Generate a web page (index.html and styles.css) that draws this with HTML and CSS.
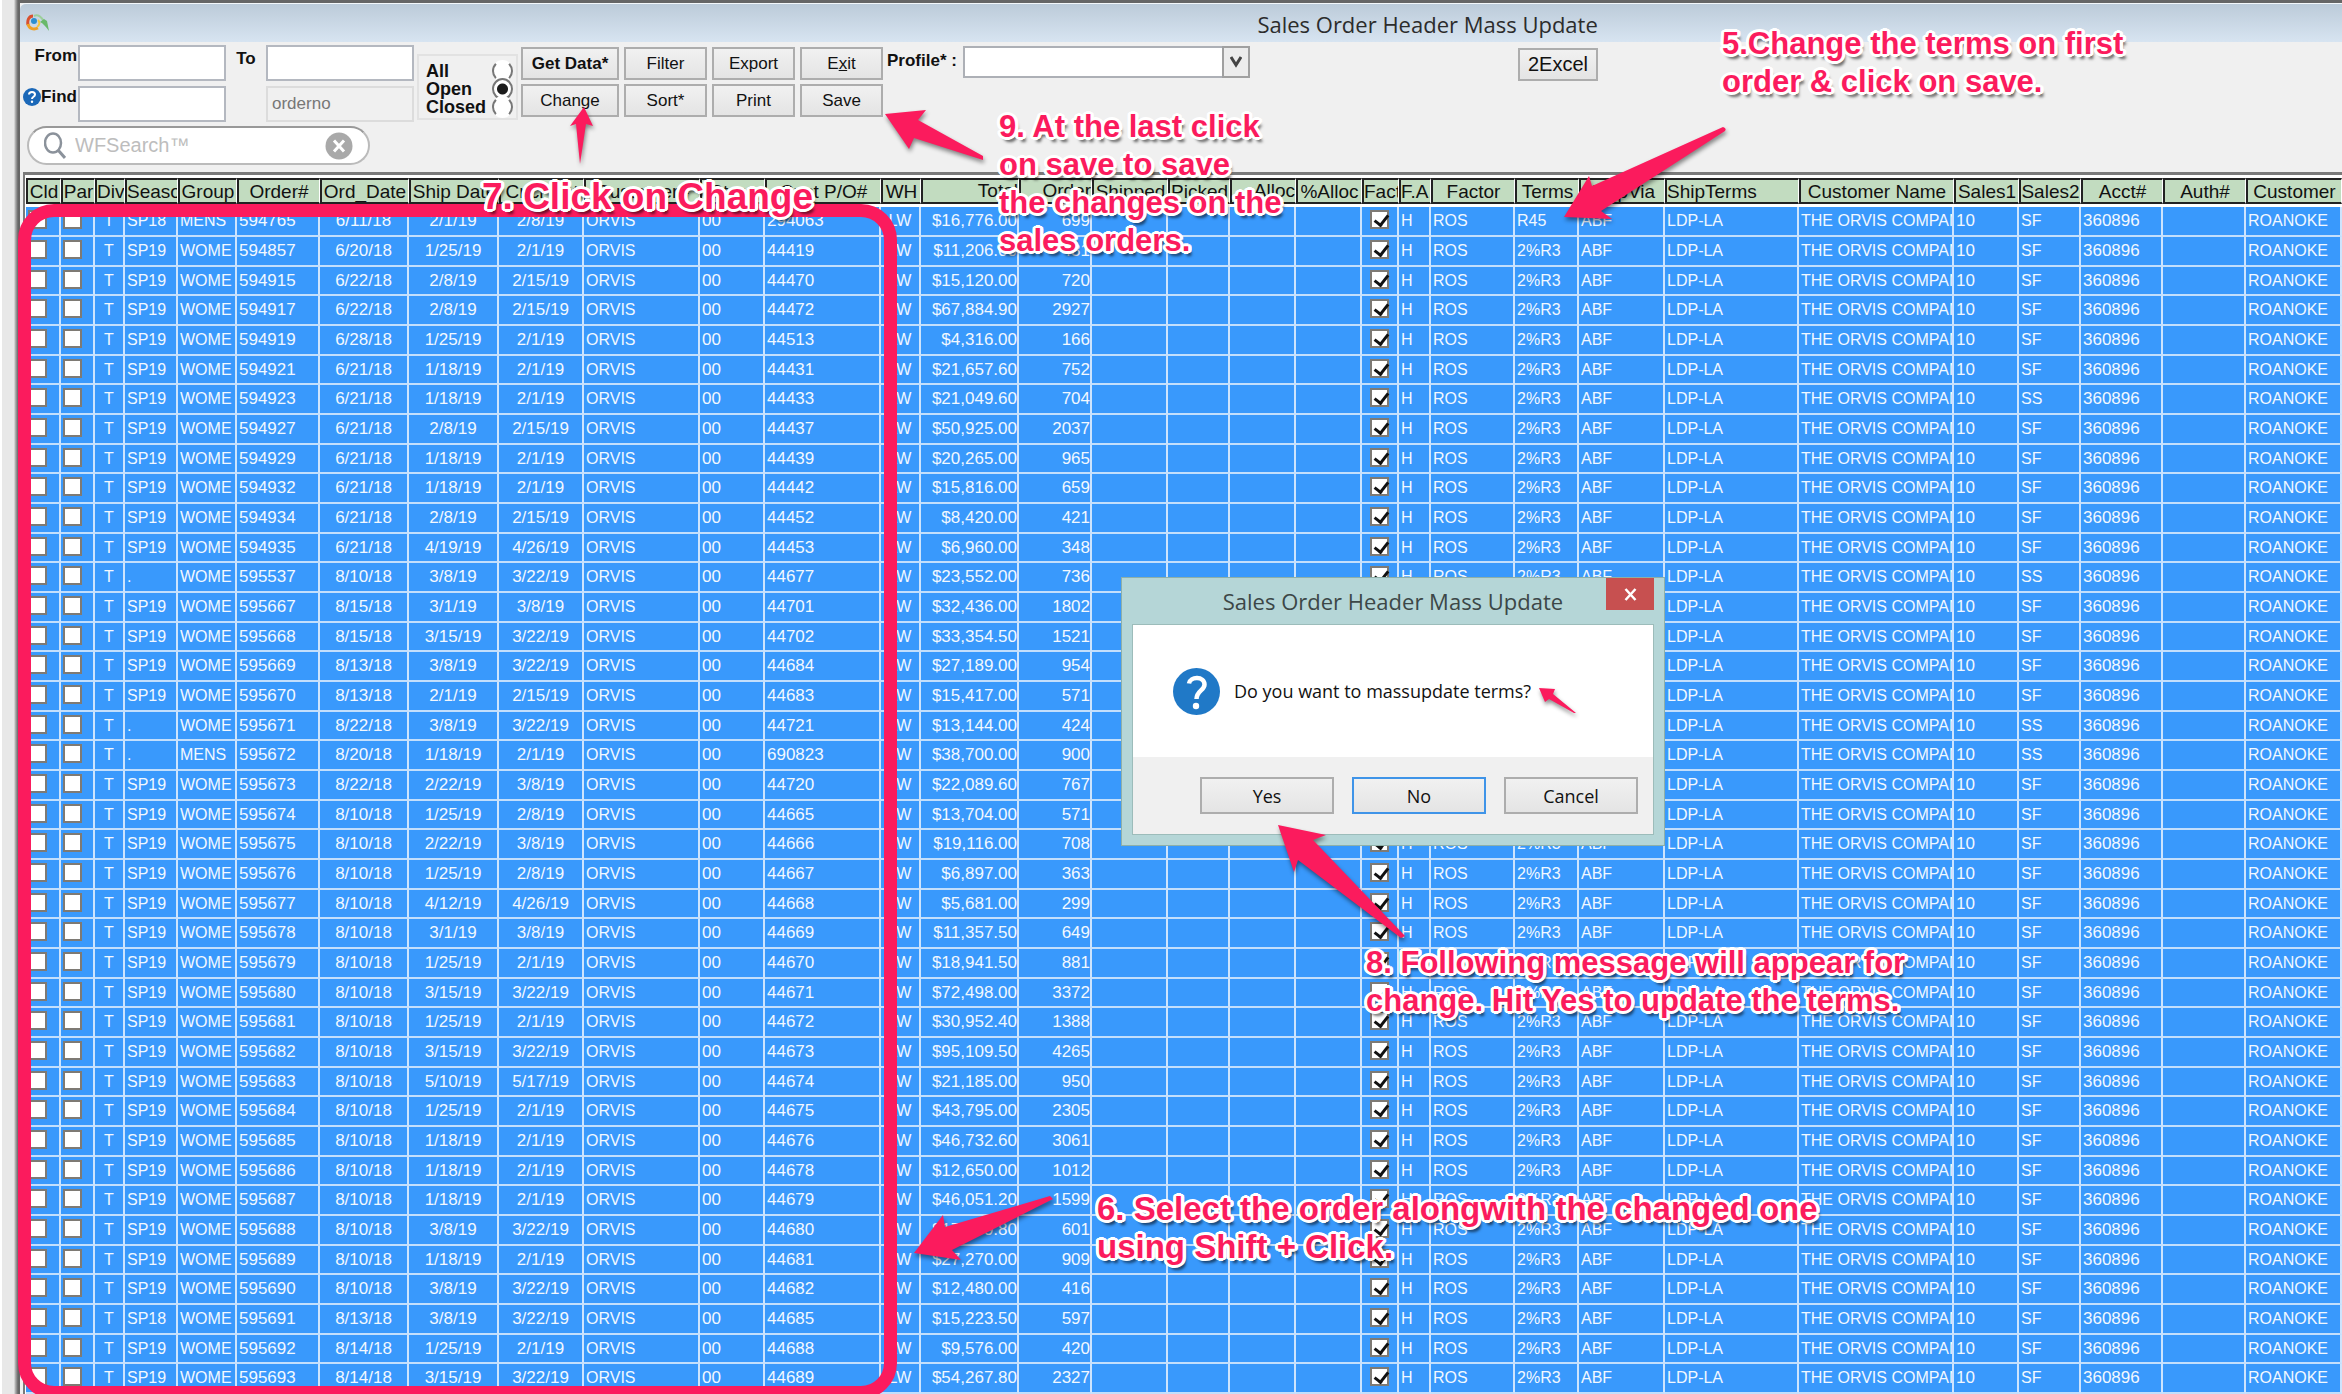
FILE: index.html
```html
<!DOCTYPE html>
<html lang="en">
<head>
<meta charset="utf-8">
<title>Sales Order Header Mass Update</title>
<link rel="stylesheet" href="styles.css">
</head>
<body>
<div class="edge"></div>
<main class="window">
  <header class="titlebar">
    <svg class="app-logo" width="24" height="18" viewBox="0 0 24 18" fill="none">
      <path d="M7 2C3 2 1 6 2 11" stroke="#d9502e" stroke-width="3"/>
      <path d="M2 10c1 5 6 6 10 4" stroke="#f0a024" stroke-width="3"/>
      <path d="M11 13c3-2 3-5 1-7" stroke="#f4c63a" stroke-width="2"/>
      <circle cx="8" cy="7" r="3" fill="#2d8fd0"/>
      <path d="M8 2c4-2 8 1 10 6" stroke="#9ccf9a" stroke-width="2"/>
      <path d="M14 8c3 1 6 5 9 9l-2-10-3-2z" fill="#69b96a"/>
    </svg>
    <h1>Sales Order Header Mass Update</h1>
  </header>

  <section class="toolbar">
    <div class="left">
      <div class="fields">
        <label for="from">From</label><input id="from" type="text">
        <label for="to" class="to">To</label><input id="to" type="text">
        <label for="find"><svg width="18" height="18" viewBox="0 0 18 18"><circle cx="9" cy="9" r="9" fill="#1b68b8"/><path d="M6 6.500C6 3 12 3 12 6.500 12 9 9 8.500 9 11" fill="none" stroke="#fff" stroke-width="2"/><circle cx="9" cy="13.800" r="1.200" fill="#fff"/></svg>Find</label><input id="find" type="text">
        <span></span><input class="key" type="text" value="orderno" aria-label="Search field" readonly>
      </div>
      <div class="search">
        <svg width="22" height="28" viewBox="0 0 22 28" fill="none" stroke="#8b929b" stroke-width="2.500"><ellipse cx="9" cy="11" rx="8" ry="9.500"/><path d="M14 18l7 8" stroke-width="3"/></svg>
        <input type="text" placeholder="WFSearch™" aria-label="WFSearch">
        <button type="button" aria-label="Clear"><svg width="28" height="28" viewBox="0 0 28 28"><circle cx="14" cy="14" r="13.500" fill="#a9a9a9"/><path d="M9 8.500l10 11M19 8.500l-10 11" stroke="#fff" stroke-width="3"/></svg></button>
      </div>
    </div>
    <div class="status">
      <label>All<input type="radio" name="status"></label>
      <label>Open<input type="radio" name="status" checked></label>
      <label>Closed<input type="radio" name="status"></label>
    </div>
    <div class="actions">
      <button type="button" class="bold">Get Data*</button><button type="button">Filter</button><button type="button">Export</button><button type="button">E<u>x</u>it</button>
      <button type="button">Change</button><button type="button">Sort*</button><button type="button">Print</button><button type="button">Save</button>
    </div>
    <div class="profile">
      <label for="profile">Profile* :</label>
      <div class="combo"><select id="profile"><option></option></select><span class="drop"><svg width="12" height="12" viewBox="0 0 12 12"><path d="M1 1l5 8 5-8" fill="none" stroke="#444" stroke-width="3"/></svg></span></div>
    </div>
    <button type="button" class="excel">2Excel</button>
  </section>

  <section class="grid">
    <table>
      <colgroup id="cols"></colgroup>
      <thead><tr id="head"></tr></thead>
      <tbody id="rows"></tbody>
    </table>
  </section>
</main>

<div class="marker-box"></div>

<div class="dialog" role="dialog" aria-labelledby="dlg-title">
  <div class="dialog-bar"><h2 id="dlg-title">Sales Order Header Mass Update</h2><button type="button" class="close" aria-label="Close"><svg width="13" height="13" viewBox="0 0 13 13"><path d="M1.500 1l10 11M11.500 1l-10 11" stroke="#fff" stroke-width="2.500"/></svg></button></div>
  <div class="dialog-body">
    <div class="message">
      <svg width="47" height="47" viewBox="0 0 47 47"><circle cx="23.500" cy="23.500" r="23.500" fill="#2079c7"/><path d="M16 15.500C17 8 31.500 8 31.500 16.500 31.500 22.500 23.500 22.500 23.500 31" fill="none" stroke="#fff" stroke-width="4.500"/><circle cx="23" cy="38" r="3.200" fill="#fff"/></svg>
      <p>Do you want to massupdate terms?</p>
    </div>
    <div class="dialog-actions"><button type="button">Yes</button><button type="button" class="default">No</button><button type="button">Cancel</button></div>
  </div>
</div>

<svg class="arrows" fill="#fb1b5d">
  <polygon points="584,107 593,126 586,124 580,164 576,124 570,126"/>
  <polygon points="885,114 926,110 918,120 983,156 983,160 914,138 909,149"/>
  <path d="M1564 217L1589 176L1592 186L1723 127Q1727 128 1725 131L1601 211L1612 219Z"/>
  <polygon points="1278,825 1326,835 1313,840 1405,936 1401,938 1298,860 1294,872"/>
  <polygon points="1539,688 1555,689 1553,694 1576,713 1574,713 1549,699 1545,702"/>
  <polygon points="914,1253 943,1215 945,1227 1050,1196 1053,1199 952,1250 961,1260"/>
</svg>
<p class="note note-5">5.Change the terms on first<br>order &amp; click on save.</p>
<p class="note note-9">9. At the last click<br>on save to save<br>the changes on the<br>sales orders.</p>
<p class="note note-7">7. Click on Change</p>
<p class="note note-8">8. Following message will appear for<br>change. Hit Yes to update the terms.</p>
<p class="note note-6">6. Select the order alongwith the changed one<br>using Shift + Click.</p>
<script src="grid.js"></script>
</body>
</html>
```
FILE: styles.css
```css
* { box-sizing: border-box; }
body {
  margin: 0;
  height: 100vh;
  display: flex;
  position: relative;
  overflow: hidden;
  background: #f0f0f0;
  font-family: "Liberation Sans", Arial, sans-serif;
  color: #111;
}
h1, h2, p { margin: 0; }
button, input, select { font-family: inherit; font-size: 17px; margin: 0; color: inherit; }
.edge {
  flex: 0 0 20px;
  border-left: 2px solid #fff;
  background: linear-gradient(90deg, #e8e8e8 12px, #bbb 13px, #666 16px, #666);
}
.window {
  flex: 1;
  min-width: 0;
  border-top: 3px solid #666;
  display: flex;
  flex-direction: column;
}
.titlebar {
  height: 39px;
  flex: none;
  display: flex;
  align-items: center;
  padding-left: 6px;
  border-top: 1px solid #f4f8fb;
  border-top-left-radius: 6px;
  background: linear-gradient(#bccbd9, #d7e4f1);
}
.titlebar h1 { flex: 1; padding-left: 20%; padding-top: 2px; text-align: center; }
h1, h2 { font: 400 22px/30px "Open Sans", sans-serif; color: #2c2c2c; }

.toolbar { display: flex; align-items: flex-start; padding: 3px 0 7px; flex: none; }
.fields {
  display: grid;
  grid-template-columns: 58px 148px 40px 148px;
  grid-auto-rows: 36px;
  row-gap: 5px;
}
.fields label { display: flex; justify-content: flex-end; align-items: center; height: 22px; padding-right: 1px; font: bold 17px/22px "Liberation Sans", sans-serif; }
.fields label.to { justify-content: center; padding-right: 0; height: 28px; }
.fields input { width: 100%; height: 36px; border: 2px solid #b4b8c0; background: #fff; padding: 0 4px; }
.fields input.key { background: #f0f0f0; border-color: #dcdcdc; color: #777; }
.search {
  width: 343px;
  height: 39px;
  margin: 4px 0 0 7px;
  padding: 0 15px;
  display: flex;
  align-items: center;
  gap: 9px;
  border: 2px solid #bbb;
  border-top-color: #999;
  border-radius: 20px;
  background: #fff;
}
.search input { flex: 1; min-width: 0; border: 0; background: none; font-size: 20px; padding: 0; }
.search input::placeholder { color: #bdbdbd; opacity: 1; }
.search button { border: 0; padding: 0; background: none; display: flex; }
.status { width: 101px; margin: 9px 0 0 3px; padding: 6px 3px 0 7px; height: 66px; border: 2px solid #e2e2e2; }
.status label { display: flex; justify-content: space-between; align-items: center; height: 18px; font: bold 18px/18px "Liberation Sans", sans-serif; }
.status input {
  appearance: none;
  flex: none;
  width: 21px;
  height: 22px;
  border: 2px solid #777;
  border-top-color: transparent;
  border-bottom-color: transparent;
  border-radius: 50%;
  background: #fff;
}
.status input:checked { border-color: #777; background: radial-gradient(circle, #1c1c1c 5px, #fff 6px); }
.actions { display: grid; grid-template-columns: 98px 83px 83px 83px; grid-auto-rows: 33px; gap: 4px 5px; margin: 2px 0 0 3px; }
.actions button, .excel, .dialog-actions button {
  border: 2px solid #adadad;
  background: linear-gradient(#f1f1f1, #e4e4e4);
  padding: 0;
}
.actions .bold { font-weight: bold; }
.profile { display: flex; margin: 1px 0 0 4px; gap: 4px; }
.profile label { font: bold 17px/30px "Liberation Sans", sans-serif; width: 72px; white-space: nowrap; }
.combo { position: relative; width: 287px; height: 32px; }
.combo select { appearance: none; width: 100%; height: 100%; border: 2px solid #adb0b6; border-radius: 0; background: #fff; }
.drop { position: absolute; right: 0; top: 0; width: 28px; height: 32px; border: 2px solid #a0a0a0; background: #ececec; display: flex; align-items: center; justify-content: center; pointer-events: none; }
.excel { width: 80px; height: 33px; margin: 3px 0 0 268px; font-size: 20px; }

.grid { flex: 1; min-height: 0; margin-left: 3px; padding: 3px 0 0 1px; overflow: hidden; background: #fff; border-top: 3px solid #7a7a7a; border-left: 2px solid #7a7a7a; }
table { width: 100%; table-layout: fixed; border-collapse: separate; border-spacing: 0; }
th {
  height: 26px;
  padding: 1px 0 0;
  overflow: hidden;
  white-space: nowrap;
  font-size: 19px;
  font-weight: 400;
  line-height: 20px;
  background: #c2dcc0;
  border: 2px solid #222;
  border-right: 1px solid #fff;
  text-align: center;
}
tbody::before { content: ""; display: block; height: 3px; }
td {
  height: 30px;
  padding: 0 0 0 2px;
  overflow: hidden;
  white-space: nowrap;
  font-size: 16px;
  line-height: 24px;
  color: #f2f8ff;
  background: #3999fc;
  border-right: 2px solid #cde4fd;
  border-bottom: 2px solid #c3dffc;
}
tr:nth-child(3n) td { height: 29px; }
.num { font-size: 17px; }
td.mid { text-align: center; padding: 0; }
.end { text-align: right; padding: 0; }
.start { text-align: left; }
td.fact { padding-left: 8px; }
td input { appearance: none; display: block; width: 19px; height: 19px; margin-bottom: 3px; border: 2px solid #7e7a74; background: #fff; }
td input:checked { position: relative; }
td input:checked::after { content: ""; position: absolute; left: 5px; top: 0; width: 6px; height: 11px; border: solid #111; border-width: 0 3px 3px 0; transform: rotate(38deg); }

.marker-box { position: absolute; left: 18px; top: 204px; width: 879px; height: 1195px; border: 13px solid #fb1b5d; border-radius: 36px; pointer-events: none; }
.arrows { position: absolute; inset: 0; width: 100%; height: 100%; pointer-events: none; filter: drop-shadow(1px 3px 2px rgba(0, 0, 0, .45)); }
.note {
  position: absolute;
  font-weight: bold;
  font-size: 31px;
  line-height: 38px;
  color: #fb1b5d;
  white-space: nowrap;
  text-shadow: 3px 0 #fff, -3px 0 #fff, 0 3px #fff, 0 -3px #fff, 2px 2px #fff, -2px 2px #fff, 2px -2px #fff, -2px -2px #fff, 3px 1px #fff, -3px 1px #fff, 3px -1px #fff, -3px -1px #fff, 3px 5px 3px rgba(0, 0, 0, .6);
}
.note-5 { left: 1722px; top: 25px; }
.note-9 { left: 999px; top: 108px; }
.note-7 { left: 482px; top: 176px; font-size: 37px; line-height: 42px; }
.note-8 { left: 1366px; top: 944px; }
.note-6 { left: 1097px; top: 1190px; font-size: 33px; }

.dialog { position: absolute; left: 1121px; top: 577px; width: 544px; padding: 0 10px 10px; background: #b5d6d7; border: 1px solid #8eb0a8; }
.dialog-bar { display: flex; height: 46px; position: relative; }
.dialog-bar h2 { flex: 1; text-align: center; line-height: 46px; color: #3c4747; }
.close { position: absolute; right: 0; top: 0; width: 48px; height: 32px; border: 0; padding: 0; background: #c75050; display: flex; align-items: center; justify-content: center; }
.dialog-body { border: 1px solid #9cbcba; background: #f0f0f0; }
.message { display: flex; align-items: center; gap: 14px; height: 132px; padding-left: 40px; background: #fff; font: 18px/26px "Open Sans", sans-serif; }
.dialog-actions { display: flex; justify-content: flex-end; gap: 18px; padding: 20px 15px 20px 0; }
.dialog-actions button { width: 134px; height: 37px; font: 18px/24px "Open Sans", sans-serif; }
.dialog-actions .default { border-color: #3f94e8; }
```
FILE: grid.js
```js
const columns = [
  ["Cld", 35], ["Par", 34], ["Div", 30], ["Season", 53], ["Group", 59], ["Order#", 83],
  ["Ord_Date", 89], ["Ship Date", 90], ["Cncl Dat", 85], ["Customer#", 116], ["Store", 65],
  ["Cust P/O#", 116], ["WH", 40], ["Total", 98, "end"], ["Order", 73, "end"], ["Shipped", 76],
  ["Picked", 62], ["Alloc", 66, "end"], ["%Alloc", 66], ["Fact", 37], ["F.A.", 32],
  ["Factor", 84], ["Terms", 64], ["ShipVia", 86], ["ShipTerms", 134, "start"],
  ["Customer Name", 155], ["Sales1", 65], ["Sales2", 62], ["Acct#", 82], ["Auth#", 83], ["Customer", 0]
];

// season|group|order|ordered|ship|cancel|po|total|qty|sales2
const orders = `SP18|MENS|594765|6/11/18|2/1/19|2/8/19|294063|16,776.00|699
SP19|WOME|594857|6/20/18|1/25/19|2/1/19|44419|11,206.00|431
SP19|WOME|594915|6/22/18|2/8/19|2/15/19|44470|15,120.00|720
SP19|WOME|594917|6/22/18|2/8/19|2/15/19|44472|67,884.90|2927
SP19|WOME|594919|6/28/18|1/25/19|2/1/19|44513|4,316.00|166
SP19|WOME|594921|6/21/18|1/18/19|2/1/19|44431|21,657.60|752
SP19|WOME|594923|6/21/18|1/18/19|2/1/19|44433|21,049.60|704|SS
SP19|WOME|594927|6/21/18|2/8/19|2/15/19|44437|50,925.00|2037
SP19|WOME|594929|6/21/18|1/18/19|2/1/19|44439|20,265.00|965
SP19|WOME|594932|6/21/18|1/18/19|2/1/19|44442|15,816.00|659
SP19|WOME|594934|6/21/18|2/8/19|2/15/19|44452|8,420.00|421
SP19|WOME|594935|6/21/18|4/19/19|4/26/19|44453|6,960.00|348
.|WOME|595537|8/10/18|3/8/19|3/22/19|44677|23,552.00|736|SS
SP19|WOME|595667|8/15/18|3/1/19|3/8/19|44701|32,436.00|1802
SP19|WOME|595668|8/15/18|3/15/19|3/22/19|44702|33,354.50|1521
SP19|WOME|595669|8/13/18|3/8/19|3/22/19|44684|27,189.00|954
SP19|WOME|595670|8/13/18|2/1/19|2/15/19|44683|15,417.00|571
.|WOME|595671|8/22/18|3/8/19|3/22/19|44721|13,144.00|424|SS
.|MENS|595672|8/20/18|1/18/19|2/1/19|690823|38,700.00|900|SS
SP19|WOME|595673|8/22/18|2/22/19|3/8/19|44720|22,089.60|767
SP19|WOME|595674|8/10/18|1/25/19|2/8/19|44665|13,704.00|571
SP19|WOME|595675|8/10/18|2/22/19|3/8/19|44666|19,116.00|708
SP19|WOME|595676|8/10/18|1/25/19|2/8/19|44667|6,897.00|363
SP19|WOME|595677|8/10/18|4/12/19|4/26/19|44668|5,681.00|299
SP19|WOME|595678|8/10/18|3/1/19|3/8/19|44669|11,357.50|649
SP19|WOME|595679|8/10/18|1/25/19|2/1/19|44670|18,941.50|881
SP19|WOME|595680|8/10/18|3/15/19|3/22/19|44671|72,498.00|3372
SP19|WOME|595681|8/10/18|1/25/19|2/1/19|44672|30,952.40|1388
SP19|WOME|595682|8/10/18|3/15/19|3/22/19|44673|95,109.50|4265
SP19|WOME|595683|8/10/18|5/10/19|5/17/19|44674|21,185.00|950
SP19|WOME|595684|8/10/18|1/25/19|2/1/19|44675|43,795.00|2305
SP19|WOME|595685|8/10/18|1/18/19|2/1/19|44676|46,732.60|3061
SP19|WOME|595686|8/10/18|1/18/19|2/1/19|44678|12,650.00|1012
SP19|WOME|595687|8/10/18|1/18/19|2/1/19|44679|46,051.20|1599
SP19|WOME|595688|8/10/18|3/8/19|3/22/19|44680|17,309.80|601
SP19|WOME|595689|8/10/18|1/18/19|2/1/19|44681|27,270.00|909
SP19|WOME|595690|8/10/18|3/8/19|3/22/19|44682|12,480.00|416
SP18|WOME|595691|8/13/18|3/8/19|3/22/19|44685|15,223.50|597
SP19|WOME|595692|8/14/18|1/25/19|2/1/19|44688|9,576.00|420
SP19|WOME|595693|8/14/18|3/15/19|3/22/19|44689|54,267.80|2327`.split("\n").map(line => line.split("|"));

const box = (label, on) => `<input type="checkbox" aria-label="${label}"${on ? " checked" : ""}>`;

document.getElementById("cols").innerHTML = columns.map(c => c[1] ? `<col style="width:${c[1]}px">` : "<col>").join("");
document.getElementById("head").innerHTML = columns.map(c => `<th class="${c[2] || ""}">${c[0]}</th>`).join("");
document.getElementById("rows").innerHTML = orders.map((o, i) => {
  const cells = [
    ["", box("Cld")], ["", box("Par")], ["mid", "T"], ["", o[0]], ["", o[1]], ["num", o[2]],
    ["num mid", o[3]], ["num mid", o[4]], ["num mid", o[5]], ["", "ORVIS"], ["num", "00"],
    ["num", o[6]], ["mid", "LW"], ["num end", "$" + o[7]], ["num end", o[8]], ["", ""], ["", ""],
    ["", ""], ["", ""], ["fact", box("Fact", true)], ["", "H"], ["", "ROS"], ["", i ? "2%R3" : "R45"],
    ["", "ABF"], ["", "LDP-LA"], ["", "THE ORVIS COMPAN"], ["num", "10"], ["", o[9] || "SF"],
    ["num", "360896"], ["", ""], ["", "ROANOKE"]
  ];
  return "<tr>" + cells.map(c => `<td class="${c[0]}">${c[1]}</td>`).join("") + "</tr>";
}).join("");
```
